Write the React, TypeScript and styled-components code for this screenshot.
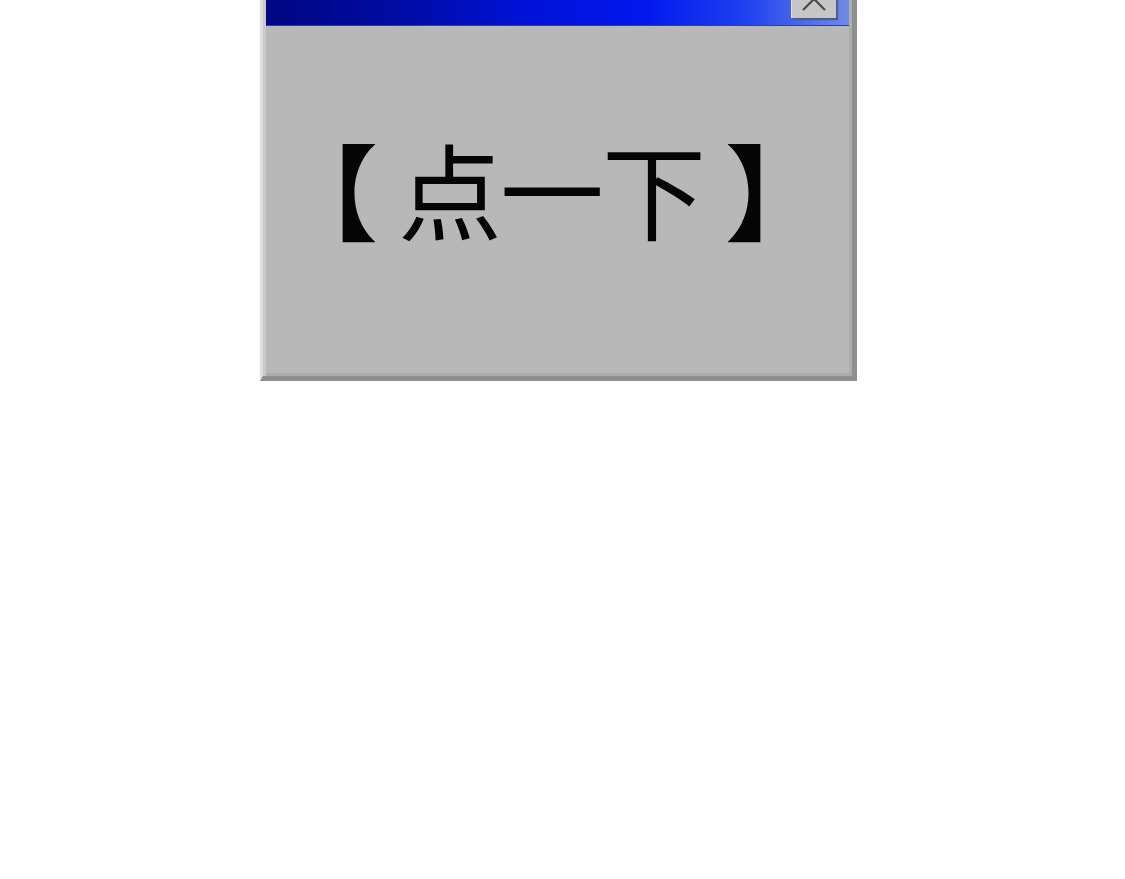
import React from 'react';
import styled, { createGlobalStyle } from 'styled-components';

const Global = createGlobalStyle`
  html, body {
    margin: 0;
    padding: 0;
    background: #fff;
    overflow: hidden;
  }
  body {
    font-family: "Noto Sans CJK SC", "Noto Sans", sans-serif;
  }
`;

const Page = styled.div`
  width: 1125px;
  height: 879px;
  display: flex;
  justify-content: flex-start;
  align-items: flex-start;
  padding-left: 260px;
  box-sizing: border-box;
`;

const Window = styled.div`
  margin-top: -24px;
  width: 597px;
  box-sizing: border-box;
  background: #b8b8b8;
  border-left: 3px solid #dedede;
  border-top: 3px solid #dedede;
  border-right: 5px solid #8f8f8f;
  border-bottom: 5px solid #8f8f8f;
  box-shadow: inset 3px 0 0 #c9c9c9, inset -3px -3px 0 #acacac;
  display: flex;
  flex-direction: column;
  padding-left: 3px;
`;

const TitleBar = styled.div`
  height: 47px;
  margin-right: 3px;
  background: linear-gradient(90deg, #000680 0%, #000ca8 25%, #0012d8 45%, #0218ee 65%, #1e40f0 82%, #6f8ce4 100%);
  border-bottom: 1px solid #2a38c8;
  display: flex;
  justify-content: flex-end;
  align-items: flex-end;
  padding: 0 13px 7px 0;
  box-sizing: border-box;
`;

const CloseButton = styled.div`
  width: 45px;
  height: 38px;
  background: #c6c6c6;
  box-shadow: inset 1px 1px 0 #e4e4e4, 2px 2px 1px #505a8c;
  display: flex;
  align-items: center;
  justify-content: center;
`;

const Body = styled.div`
  height: 350px;
  display: flex;
  align-items: center;
  justify-content: flex-start;
  padding: 0 0 26px 8px;
  box-sizing: border-box;
`;

const Label = styled.div`
  display: flex;
  align-items: center;
  font-family: "Noto Sans CJK SC", "Noto Sans", sans-serif;
  font-size: 104px;
  font-weight: 400;
  color: #050505;
  line-height: 1;
  white-space: nowrap;
`;

const Glyph = styled.span<{ $shift?: number }>`
  display: inline-block;
  width: 104px;
  text-align: center;
  margin-left: ${p => p.$shift ?? -2}px;
`;

const Bracket = styled(Glyph)`
  font-weight: 700;
`;

export default function App() {
  return (
    <>
      <Global />
      <Page>
        <Window>
          <TitleBar>
            <CloseButton>
              <svg width="30" height="26" viewBox="0 0 30 26">
                <path d="M4 2 L26 24 M26 2 L4 24" stroke="#4a4a4a" strokeWidth="2.2" fill="none" />
              </svg>
            </CloseButton>
          </TitleBar>
          <Body>
            <Label>
              <Bracket $shift={0}>【</Bracket>
              <Glyph $shift={20}>点</Glyph>
              <Glyph>一</Glyph>
              <Glyph>下</Glyph>
              <Bracket $shift={19}>】</Bracket>
            </Label>
          </Body>
        </Window>
      </Page>
    </>
  );
}
